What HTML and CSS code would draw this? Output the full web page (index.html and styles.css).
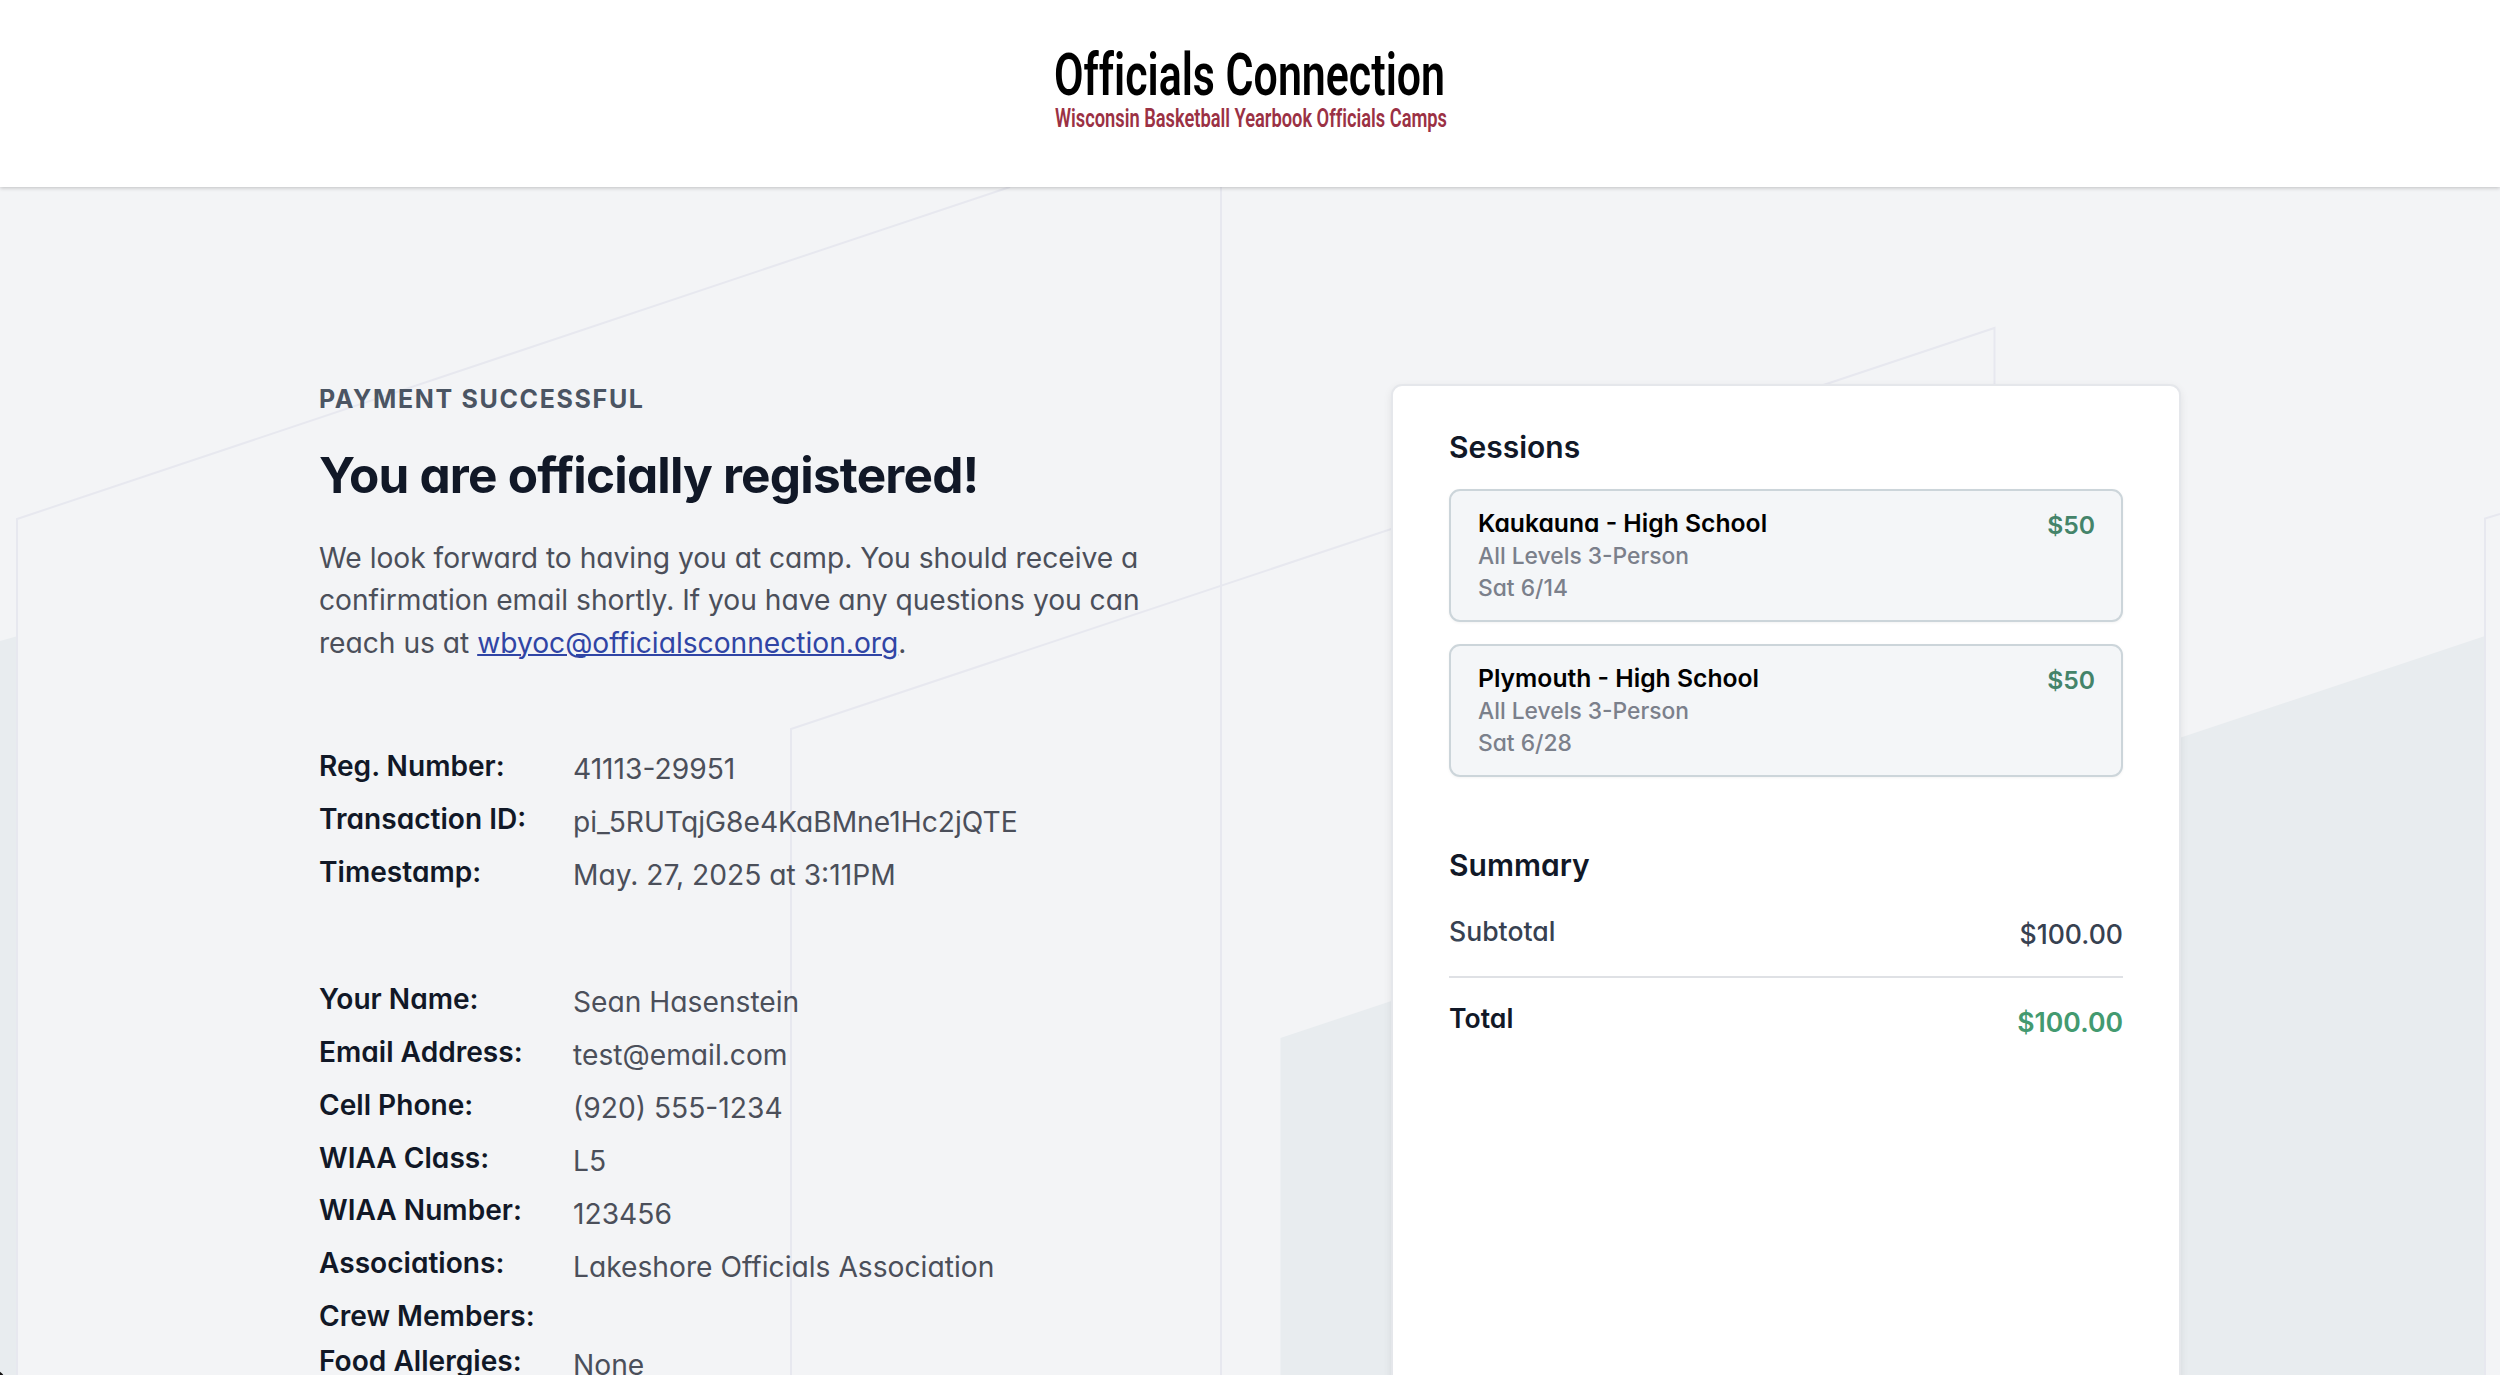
FILE: index.html
```html
<!DOCTYPE html>
<html lang="en">
<head>
<meta charset="utf-8">
<title>Officials Connection</title>
<link rel="stylesheet" href="styles.css">
</head>
<body>
<header class="site-header">
  <svg class="logo" width="400" height="100" viewBox="0 0 400 100" role="img" aria-label="Officials Connection">
    <text class="logo-title" x="4" y="55.500" textLength="391" lengthAdjust="spacingAndGlyphs">Officials Connection</text>
    <text class="logo-tagline" x="5" y="88" textLength="392" lengthAdjust="spacingAndGlyphs">Wisconsin Basketball Yearbook Officials Camps</text>
  </svg>
</header>
<main class="page">
  <svg class="backdrop" width="2500" height="1188" viewBox="0 187 2500 1188" aria-hidden="true">
    <g class="backdrop-fill">
      <path d="M0 641L18 636V1375H0Z"/>
      <path d="M1280.500 1038L2485 636V1375H1280.500Z"/>
    </g>
    <g class="backdrop-line">
      <path d="M17 1375V519L1010 187"/>
      <path d="M1221 187V1375"/>
      <path d="M791 1375V729L1994.500 328V1375"/>
      <path d="M2485 1375V518.500L2500 514"/>
    </g>
  </svg>
  <section class="details">
    <p class="eyebrow">PAYMENT SUCCESSFUL</p>
    <h1 class="title">You are officially registered!</h1>
    <p class="intro">We look forward to having you at camp. You should receive a<br>confirmation email shortly. If you have any questions you can<br>reach us at <a class="link" href="mailto:wbyoc@officialsconnection.org">wbyoc@officialsconnection.org</a>.</p>
    <dl class="facts">
      <div class="fact"><dt>Reg. Number:</dt><dd>41113-29951</dd></div>
      <div class="fact"><dt>Transaction ID:</dt><dd>pi_5RUTqjG8e4KaBMne1Hc2jQTE</dd></div>
      <div class="fact"><dt>Timestamp:</dt><dd>May. 27, 2025 at 3:11PM</dd></div>
    </dl>
    <dl class="facts">
      <div class="fact"><dt>Your Name:</dt><dd>Sean Hasenstein</dd></div>
      <div class="fact"><dt>Email Address:</dt><dd>test@email.com</dd></div>
      <div class="fact"><dt>Cell Phone:</dt><dd>(920) 555-1234</dd></div>
      <div class="fact"><dt>WIAA Class:</dt><dd>L5</dd></div>
      <div class="fact"><dt>WIAA Number:</dt><dd>123456</dd></div>
      <div class="fact"><dt>Associations:</dt><dd>Lakeshore Officials Association</dd></div>
      <div class="fact fact-empty"><dt>Crew Members:</dt><dd></dd></div>
      <div class="fact"><dt>Food Allergies:</dt><dd>None</dd></div>
    </dl>
  </section>
  <aside class="card">
    <h2 class="card-title">Sessions</h2>
    <ul class="sessions">
      <li class="session">
        <div><p class="session-name">Kaukauna - High School</p><p class="session-meta">All Levels 3-Person</p><p class="session-meta">Sat 6/14</p></div>
        <span class="price">$50</span>
      </li>
      <li class="session">
        <div><p class="session-name">Plymouth - High School</p><p class="session-meta">All Levels 3-Person</p><p class="session-meta">Sat 6/28</p></div>
        <span class="price">$50</span>
      </li>
    </ul>
    <h2 class="card-title">Summary</h2>
    <div class="row subtotal"><span class="row-label">Subtotal</span><span class="amount">$100.00</span></div>
    <div class="row total"><span class="row-label">Total</span><span class="amount">$100.00</span></div>
  </aside>
  <span class="corner-badge"></span>
</main>
</body>
</html>
```
FILE: styles.css
```css
* { box-sizing: border-box; margin: 0; padding: 0; }
body {
  height: 1375px;
  overflow: hidden;
  background: #f3f4f6;
  font-family: Inter, "Liberation Sans", sans-serif;
  font-feature-settings: "cv11";
  color: #111827;
}
.site-header {
  position: relative;
  z-index: 2;
  height: 187px;
  display: flex;
  justify-content: center;
  padding-top: 39px;
  background: #fff;
  box-shadow: 0 1px 4px rgba(0, 0, 0, .22);
}
.logo { overflow: visible; font-family: Roboto, sans-serif; font-variant-ligatures: none; }
.logo-title { font-size: 59px; font-weight: 600; fill: #000; }
.logo-tagline { font-size: 25px; font-weight: 600; fill: #9b3144; }
.page {
  position: relative;
  height: 1188px;
  display: flex;
  align-items: flex-start;
  overflow: hidden;
  padding: 197px 319px 0 319px;
}
.backdrop { position: absolute; left: 0; top: 0; }
.backdrop-fill { fill: #e8ecef; }
.backdrop-line { fill: none; stroke: #e7e8ef; stroke-width: 2; }
.details { position: relative; width: 1072px; flex: none; }
.eyebrow { font-size: 25px; line-height: 30px; font-weight: 700; letter-spacing: 1.65px; color: #4b5563; }
.title { margin-top: 31px; font-size: 49.500px; line-height: 60px; font-weight: 700; letter-spacing: -.8px; }
.intro { margin-top: 32px; font-size: 28.200px; line-height: 42.300px; color: #4b4f5a; letter-spacing: -.02px; }
.link { color: #3045a5; text-decoration-thickness: 2px; }
.facts { margin-top: 84px; }
.facts + .facts { margin-top: 74px; }
.fact { display: flex; height: 52.950px; line-height: 34px; font-size: 28.200px; }
.fact dt { width: 254px; flex: none; padding-top: 1px; font-size: 28.100px; font-weight: 600; white-space: nowrap; }
.fact dd { padding-top: 4.500px; color: #4b4f5a; }
.fact-empty { height: 45px; }
.card {
  position: relative;
  width: 790px;
  height: 1100px;
  flex: none;
  padding: 43px 56px;
  background: #fff;
  border: 2px solid #e5e7eb;
  border-radius: 11px;
  box-shadow: 0 3px 8px rgba(0, 0, 0, .08);
}
.card-title { font-size: 30px; line-height: 36px; font-weight: 600; }
.sessions { list-style: none; display: grid; gap: 22px; margin: 24px 0 70px; }
.session {
  display: flex;
  justify-content: space-between;
  height: 133px;
  padding: 16px 26px 16px 27px;
  background: #f4f6f8;
  border: 2px solid #ccd5da;
  border-radius: 11px;
  box-shadow: 0 1px 3px rgba(0, 0, 0, .05);
}
.session-name { margin-bottom: 1px; font-size: 24.700px; line-height: 32px; font-weight: 600; color: #000; }
.session-meta { font-size: 22.800px; line-height: 32px; font-weight: 500; color: #7b808b; }
.price { padding-top: 1px; font-size: 24.700px; line-height: 34px; font-weight: 600; color: #44846a; }
.row { display: flex; justify-content: space-between; font-size: 26.600px; line-height: 34px; }
.subtotal { height: 79px; padding-top: 15px; margin-top: 16px; border-bottom: 2px solid #dfe1e5; font-weight: 500; color: #374151; }
.total { padding-top: 23px; font-weight: 600; }
.amount { padding-top: 3px; }
.total .amount { padding-top: 4px; color: #439a70; }
.corner-badge { position: absolute; left: -17px; bottom: -17px; width: 22px; height: 22px; border-radius: 50%; background: #111; }
```
